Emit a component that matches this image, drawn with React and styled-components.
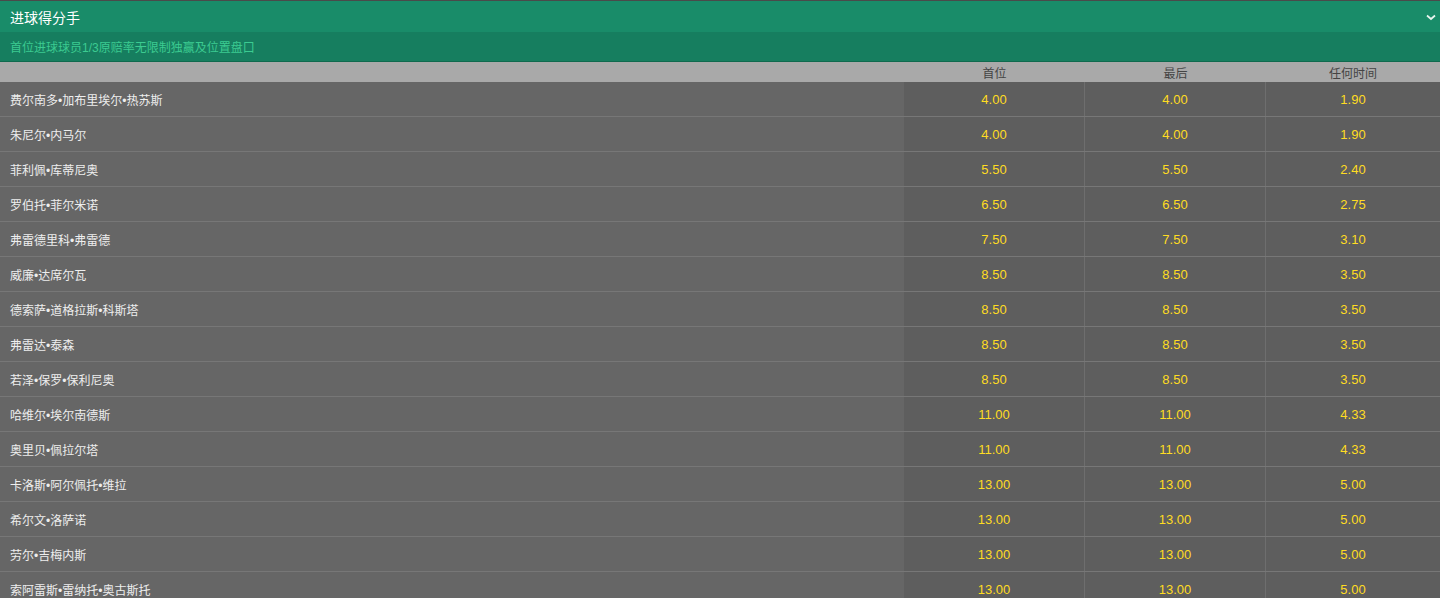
import React from 'react'
import styled, { createGlobalStyle } from 'styled-components'

const GlobalStyle = createGlobalStyle`
  body {
    margin: 0;
    background: #5e5e5e;
    font-family: "Liberation Sans", "Noto Sans CJK SC", sans-serif;
  }
`

const rows = [
  ['费尔南多•加布里埃尔•热苏斯', '4.00', '4.00', '1.90'],
  ['朱尼尔•内马尔', '4.00', '4.00', '1.90'],
  ['菲利佩•库蒂尼奥', '5.50', '5.50', '2.40'],
  ['罗伯托•菲尔米诺', '6.50', '6.50', '2.75'],
  ['弗雷德里科•弗雷德', '7.50', '7.50', '3.10'],
  ['威廉•达席尔瓦', '8.50', '8.50', '3.50'],
  ['德索萨•道格拉斯•科斯塔', '8.50', '8.50', '3.50'],
  ['弗雷达•泰森', '8.50', '8.50', '3.50'],
  ['若泽•保罗•保利尼奥', '8.50', '8.50', '3.50'],
  ['哈维尔•埃尔南德斯', '11.00', '11.00', '4.33'],
  ['奥里贝•佩拉尔塔', '11.00', '11.00', '4.33'],
  ['卡洛斯•阿尔佩托•维拉', '13.00', '13.00', '5.00'],
  ['希尔文•洛萨诺', '13.00', '13.00', '5.00'],
  ['劳尔•吉梅内斯', '13.00', '13.00', '5.00'],
  ['索阿雷斯•雷纳托•奥古斯托', '13.00', '13.00', '5.00'],
]

function App() {
  return (
    <>
      <GlobalStyle />
      <Market>
        <TitleBar>
          <span>进球得分手</span>
          <svg width="10" height="7" viewBox="0 0 10 7">
            <path d="M1 1.5 L5 5 L9 1.5" fill="none" stroke="#e8f5ef" strokeWidth="1.7" />
          </svg>
        </TitleBar>
        <SubBar>首位进球球员1/3原赔率无限制独赢及位置盘口</SubBar>
        <HeadRow>
          <div />
          <HeadCell>首位</HeadCell>
          <HeadCell>最后</HeadCell>
          <HeadCell>任何时间</HeadCell>
        </HeadRow>
        {rows.map((r) => (
          <Row key={r[0]}>
            <Name>{r[0]}</Name>
            <Odd>{r[1]}</Odd>
            <Odd>{r[2]}</Odd>
            <Odd $last>{r[3]}</Odd>
          </Row>
        ))}
      </Market>
    </>
  )
}

const Market = styled.div`
  border-top: 1px solid #4a4a4a;
  height: 597px;
  overflow: hidden;
`

const TitleBar = styled.div`
  height: 31px;
  background: #198c69;
  color: #fff;
  font-size: 14px;
  display: flex;
  align-items: center;
  justify-content: space-between;
  padding: 0 4px 0 10px;
  svg { margin-top: 2px; }
`

const SubBar = styled.div`
  height: 29px;
  background: #167e5f;
  border-bottom: 1px solid #0f6a4e;
  color: #3ccb91;
  font-size: 12px;
  display: flex;
  align-items: center;
  padding-left: 10px;
`

const grid = `
  display: grid;
  grid-template-columns: 904px 181px 181px 1fr;
`

const HeadRow = styled.div`
  ${grid}
  height: 20px;
  background: #a9a9a9;
`

const HeadCell = styled.div`
  color: #444;
  font-size: 12px;
  display: flex;
  align-items: center;
  justify-content: center;
`

const Row = styled.div`
  ${grid}
  height: 34px;
  border-bottom: 1px solid #777;
`

const Name = styled.div`
  background: #666;
  color: #eee;
  font-size: 12px;
  display: flex;
  align-items: center;
  padding-left: 10px;
`

const Odd = styled.div`
  background: #5e5e5e;
  color: #ffdc22;
  font-size: 13px;
  display: flex;
  align-items: center;
  justify-content: center;
  border-right: ${(p) => (p.$last ? 'none' : '1px solid #6e6e6e')};
`

export default App
